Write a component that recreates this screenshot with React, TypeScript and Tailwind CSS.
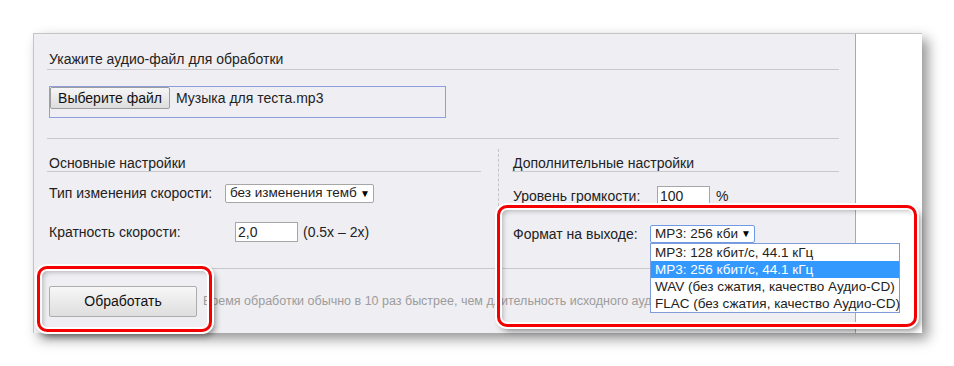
import React from "react"

function Select({ text, w, focus }: { text: string; w: string; focus?: boolean }) {
  return (
    <div
      className={`${w} h-full flex items-center bg-white border rounded-[2px] pl-[4px] pr-[3px] text-[13.5px] ${
        focus ? "border-[#6f9be6]" : "border-[#a6a6a6]"
      }`}
    >
      <span className="flex-1 overflow-hidden whitespace-nowrap">{text}</span>
      <span className="text-[10px] leading-none ml-[1px] text-black">▼</span>
    </div>
  )
}

const formats = [
  "MP3: 128 кбит/с, 44.1 кГц",
  "MP3: 256 кбит/с, 44.1 кГц",
  "WAV (без сжатия, качество Аудио-CD)",
  "FLAC (без сжатия, качество Аудио-CD)",
]

export default function App() {
  return (
    <div className="relative w-[954px] h-[366px] bg-white overflow-hidden pt-[33px] pl-[33px] font-['Liberation_Sans',Arial,sans-serif] text-[14px] text-[#222]">
      <div className="flex w-[889px] h-[300px] bg-white border-l border-t border-[#c4c4c4] shadow-[6px_6px_12px_rgba(0,0,0,0.42)]">
        <div className="w-[822px] h-full bg-[#efeef2] border-r border-[#a9a9ab] pl-[13px] pr-[16px]">
          <div className="pt-[17px] pb-[2px] leading-4 pl-[2px] border-b border-[#c9c8cc]">
            Укажите аудио-файл для обработки
          </div>

          <div className="mt-[16px] ml-[2px] w-[397px] h-[32px] border border-[#8d9ee0]">
            <div className="flex items-center">
              <button className="w-[120px] h-[22px] bg-gradient-to-b from-[#f6f6f6] to-[#dddddd] border border-[#9d9d9d] rounded-[2px] text-[#111]">
                Выберите файл
              </button>
              <span className="ml-[6px]">Музыка для теста.mp3</span>
            </div>
          </div>

          <div className="mt-[20px] border-t border-[#c9c8cc]" />

          <div className="flex h-[130px] border-b border-[#c9c8cc]">
            <div className="w-[434px]">
              <div className="pt-[16px] leading-4 pl-[2px] border-b border-[#c9c8cc]">Основные настройки</div>
              <div className="mt-[12px] h-[19px] flex items-center pl-[2px]">
                <span className="w-[176px]">Тип изменения скорости:</span>
                <Select text="без изменения темб" w="w-[149px]" />
              </div>
              <div className="mt-[19px] h-[20px] flex items-center pl-[2px]">
                <span className="w-[186px]">Кратность скорости:</span>
                <div className="w-[63px] h-full bg-white border border-[#a6a6a6] pl-[2px] leading-[18px]">2,0</div>
                <span className="ml-[5px]">(0.5x – 2x)</span>
              </div>
            </div>

            <div className="ml-[17px] mt-[10px] mb-[8px] border-l border-dashed border-[#c4c4c8]" />

            <div className="ml-[13px] flex-1">
              <div className="pt-[16px] leading-4 pl-[1px] border-b border-[#c9c8cc]">Дополнительные настройки</div>
              <div className="mt-[14px] h-[20px] flex items-center pl-[1px]">
                <span className="w-[144px]">Уровень громкости:</span>
                <div className="w-[53px] h-full bg-white border border-[#a6a6a6] pl-[2px] leading-[18px]">100</div>
                <span className="ml-[6px]">%</span>
              </div>
              <div className="mt-[19px] h-[18px] flex items-center pl-[1px]">
                <span className="w-[137px]">Формат на выходе:</span>
                <div className="relative h-full">
                  <Select text="MP3: 256 кби" w="w-[105px]" focus />
                  <div className="absolute z-10 left-0 top-[18px] w-[250px] bg-white border border-[#7f9bd8] text-[13.5px]">
                    {formats.map((f, i) => (
                      <div
                        key={f}
                        className={`h-[17px] leading-[17px] pl-[4px] whitespace-nowrap ${
                          i === 1 ? "bg-[#3399ff] text-white" : ""
                        }`}
                      >
                        {f}
                      </div>
                    ))}
                  </div>
                </div>
              </div>
            </div>
          </div>

          <div className="mt-[17px] flex items-center">
            <button className="ml-[2px] w-[148px] h-[31px] bg-gradient-to-b from-[#f7f7f7] to-[#dedede] border border-[#acacac] rounded-[2px] text-[#111]">
              Обработать
            </button>
            <span className="ml-[6px] text-[12.5px] text-[#9c9c9c] whitespace-nowrap">
              Время обработки обычно в 10 раз быстрее, чем длительность исходного аудио
            </span>
          </div>
        </div>
      </div>

      <div className="absolute left-[37px] top-[266px] w-[175px] h-[66px] border-[3px] border-[#f40000] rounded-[10px] shadow-[0_0_0_2px_#fff,inset_0_0_0_2px_#fff,3px_4px_6px_rgba(0,0,0,0.45),inset_3px_3px_5px_rgba(0,0,0,0.25)]" />
      <div className="absolute left-[497px] top-[205px] w-[420px] h-[122px] border-[3px] border-[#f40000] rounded-[10px] shadow-[0_0_0_2px_#fff,inset_0_0_0_2px_#fff,3px_4px_6px_rgba(0,0,0,0.45),inset_3px_3px_5px_rgba(0,0,0,0.25)]" />
    </div>
  )
}
